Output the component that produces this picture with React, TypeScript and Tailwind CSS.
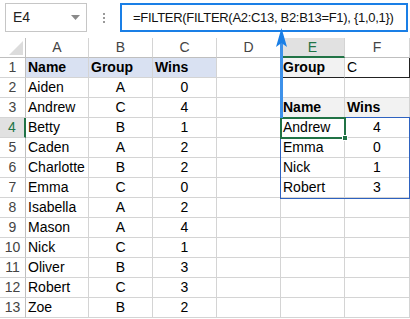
const rows = [
  ["Name", "Group", "Wins", "", "Group", "C"],
  ["Aiden", "A", "0", "", "", ""],
  ["Andrew", "C", "4", "", "Name", "Wins"],
  ["Betty", "B", "1", "", "Andrew", "4"],
  ["Caden", "A", "2", "", "Emma", "0"],
  ["Charlotte", "B", "2", "", "Nick", "1"],
  ["Emma", "C", "0", "", "Robert", "3"],
  ["Isabella", "A", "2", "", "", ""],
  ["Mason", "A", "4", "", "", ""],
  ["Nick", "C", "1", "", "", ""],
  ["Oliver", "B", "3", "", "", ""],
  ["Robert", "C", "3", "", "", ""],
  ["Zoe", "B", "2", "", "", ""],
];

const cols = ["A", "B", "C", "D", "E", "F"];

// styles for one cell, r is 1-based row, c is 0-based column
const cellClass = (r: number, c: number) => {
  let cls = "border-r border-b border-[#d4d4d4] flex items-center overflow-hidden whitespace-nowrap";
  if (r === 1 && c < 3) cls += " bg-[#d9e1f2] font-bold pl-[2px]";
  else if (c === 1 || c === 2) cls += " justify-center";
  else if (c === 0) cls += " pl-[2px]";
  if (c === 4) cls += " pl-[2px]";
  if (c === 5 && (r === 1 || r === 3)) cls += " pl-[2px]";
  else if (c === 5) cls += " justify-center";
  if (r === 1 && c === 4) cls += " bg-[#f2f2f2] font-bold border-b-[#222]";
  if (r === 1 && c === 5) cls += " border-b-[#222] border-r-[#222]";
  if (r === 3 && c >= 4) cls += " bg-[#f2f2f2] font-bold";
  return cls;
};

const App = () => {
  return (
    <div
      className="relative w-[410px] h-[319px] bg-white overflow-hidden text-[14px] text-black"
      style={{ fontFamily: '"Liberation Sans", Arial, sans-serif' }}
    >
      {/* formula bar */}
      <div className="flex items-start h-[38px] pt-[3px] pl-[5px]">
        <div className="w-[82px] h-[29px] border border-[#c6c6c6] flex items-center justify-between pl-[7px] pr-[6px] text-[#222]">
          <span>E4</span>
          <svg width="9" height="5" viewBox="0 0 9 5">
            <polygon points="0,0 9,0 4.5,5" fill="#8a8a8a" />
          </svg>
        </div>
        <div className="w-[33px] h-[29px] flex flex-col items-center justify-center gap-[2px]">
          <span className="w-[2px] h-[2px] bg-[#9a9a9a]"></span>
          <span className="w-[2px] h-[2px] bg-[#9a9a9a]"></span>
          <span className="w-[2px] h-[2px] bg-[#9a9a9a]"></span>
        </div>
        <div className="w-[288px] h-[29px] border-2 border-[#1a7fe6] flex items-center pl-[11px] text-[13px] tracking-[-0.3px] text-[#111]">
          =FILTER(FILTER(A2:C13, B2:B13=F1), {"{1,0,1}"})
        </div>
      </div>

      {/* sheet grid */}
      <div className="grid grid-cols-[26px_63px_64px_64px_64px_64px_65px] auto-rows-[20px]">
        <div className="border-r border-b border-[#bfbfbf] relative">
          <svg className="absolute right-[2px] bottom-[2px]" width="14" height="14" viewBox="0 0 14 14">
            <polygon points="14,0 14,14 0,14" fill="#dcdcdc" />
          </svg>
        </div>
        {cols.map((c) =>
          c === "E" ? (
            <div
              key={c}
              className="bg-[#e1e1e1] text-[#217346] border-r border-[#d4d4d4] border-b-2 border-b-[#217346] flex items-center justify-center"
            >
              {c}
            </div>
          ) : (
            <div
              key={c}
              className="text-[#444] border-r border-[#d4d4d4] border-b border-b-[#bfbfbf] flex items-center justify-center"
            >
              {c}
            </div>
          )
        )}
        {rows.map((row, i) => {
          const r = i + 1;
          return [
            r === 4 ? (
              <div
                key={`h${r}`}
                className="bg-[#e1e1e1] text-[#217346] border-b border-[#d4d4d4] border-r-2 border-r-[#217346] flex items-center justify-center"
              >
                {r}
              </div>
            ) : (
              <div
                key={`h${r}`}
                className="text-[#444] border-b border-[#d4d4d4] border-r border-r-[#bfbfbf] flex items-center justify-center"
              >
                {r}
              </div>
            ),
            ...row.map((v, c) => (
              <div key={`${r}-${c}`} className={cellClass(r, c)}>
                {v}
              </div>
            )),
          ];
        })}
      </div>

      {/* result range E4:F7 */}
      <div className="absolute left-[280px] top-[117px] w-[130px] h-[82px] border border-[#2e62c0] pointer-events-none"></div>
      {/* active cell E4 */}
      <div className="absolute left-[280px] top-[117px] w-[66px] h-[22px] border-2 border-[#217346] pointer-events-none"></div>
      <div className="absolute left-[342px] top-[135px] w-[6px] h-[6px] bg-[#217346] border border-white"></div>

      {/* arrow from formula to results */}
      <svg className="absolute left-[275px] top-[28px]" width="13" height="90" viewBox="0 0 13 90">
        <line x1="6.5" y1="12" x2="6.5" y2="90" stroke="#3d91ea" strokeWidth="3" />
        <polygon points="6.5,0 12,19 6.5,15 1,19" fill="#1a7fe6" />
      </svg>
    </div>
  );
};

export default App;
